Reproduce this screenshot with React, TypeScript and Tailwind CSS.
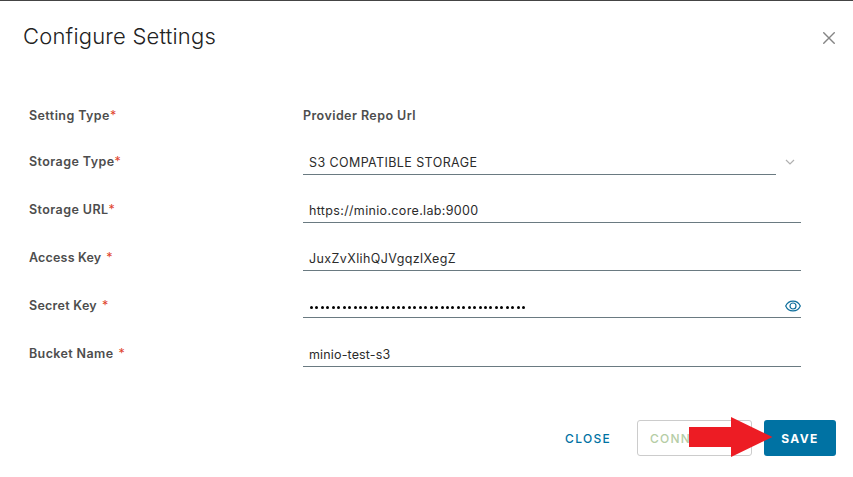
import type { ReactNode } from "react";

type RowProps = {
  label: string;
  labelClass: string;
  rowClass: string;
  required?: "tight" | "spaced";
  children: ReactNode;
};

const SECRET_LENGTH = 40;

function Row({ label, labelClass, rowClass, required = "spaced", children }: RowProps) {
  return (
    <div className={`flex ${rowClass}`}>
      <label className="w-[274px] shrink-0 text-[12.5px] leading-5 font-semibold whitespace-nowrap text-[#4d4d4d]">
        <span className={labelClass}>{label}</span>
        <span className={`font-normal text-[#e0442c] ${required === "spaced" ? "ml-[5px]" : ""}`}>*</span>
      </label>
      {children}
    </div>
  );
}

function Field({ children, className = "w-[498px]" }: { children: ReactNode; className?: string }) {
  return (
    <div
      className={`-mt-6 flex items-end border-b border-[#6a7a81] pl-1.5 text-[12.5px] leading-[22px] whitespace-nowrap text-[#2b2b2b] ${className}`}
    >
      {children}
    </div>
  );
}

function EyeIcon() {
  return (
    <svg width="16" height="12" viewBox="0 0 16 12" fill="none" stroke="#0f6f9c" strokeWidth="1.2">
      <path d="M.7 6C2.200 2.600 4.900 1.100 8 1.100s5.800 1.500 7.300 4.900C13.800 9.400 11.100 10.900 8 10.900S2.200 9.400.7 6Z" />
      <circle cx="8" cy="6" r="3" />
    </svg>
  );
}

export default function App() {
  return (
    <div className="relative h-[477px] w-[853px] overflow-hidden border-t border-[#444] bg-white font-['Inter',sans-serif]">
      {/* Header */}
      <header className="flex h-[80px] items-start justify-between pt-[19px] pr-[18px] pl-[23px]">
        <h1 className="text-[22px] leading-8 font-light tracking-[0.2px] text-[#222]">Configure Settings</h1>
        <button className="mt-[12px]" aria-label="Close dialog">
          <svg width="12" height="12" viewBox="0 0 12 12" fill="none" stroke="#858585" strokeWidth="1.4">
            <path d="M.3.3l11.400 11.400M11.700.3L.3 11.700" />
          </svg>
        </button>
      </header>

      {/* Settings form */}
      <main className="pl-[29px]">
        <Row label="Setting Type" labelClass="tracking-[0.42px]" rowClass="h-[46px] pt-[25px]" required="tight">
          <div className="text-[12.5px] leading-5 font-semibold tracking-[0.43px] text-[#4d4d4d]">
            Provider Repo Url
          </div>
        </Row>
        <Row label="Storage Type" labelClass="tracking-[0.42px]" rowClass="h-[48px] pt-[25px]" required="tight">
          <Field className="w-[473px]">
            <span className="tracking-[0.4px]">S3 COMPATIBLE STORAGE</span>
          </Field>
          <svg className="mt-[7px] ml-[9px]" width="10" height="7" viewBox="0 0 10 7" fill="none" stroke="#b0b0b0" strokeWidth="1.2">
            <path d="M1 1l4 4 4-4" />
          </svg>
        </Row>
        <Row label="Storage URL" labelClass="tracking-[0.42px]" rowClass="h-[48px] pt-[25px]" required="tight">
          <Field>
            <span className="tracking-[0.34px]">https://minio.core.lab:9000</span>
          </Field>
        </Row>
        <Row label="Access Key" labelClass="tracking-[0.18px]" rowClass="h-[48px] pt-[25px]">
          <Field>
            <span className="tracking-[0.4px]">JuxZvXlihQJVgqzlXegZ</span>
          </Field>
        </Row>
        <Row label="Secret Key" labelClass="tracking-[0.27px]" rowClass="h-[47px] pt-[25px]">
          <Field>
            <div className="mb-[8px] flex flex-1 gap-[2.440px] pl-px">
              {Array.from({ length: SECRET_LENGTH }, (_, i) => (
                <span key={i} className="size-[3px] rounded-full bg-black" />
              ))}
            </div>
            <button className="mb-[5px]" aria-label="Show secret key">
              <EyeIcon />
            </button>
          </Field>
        </Row>
        <Row label="Bucket Name" labelClass="tracking-[0.38px]" rowClass="h-[49px] pt-[26px]">
          <Field>
            <span className="tracking-[0.15px]">minio-test-s3</span>
          </Field>
        </Row>
      </main>

      {/* Actions */}
      <footer className="mt-[53px] flex h-[36px] justify-end pr-[17px] text-[12px] font-medium">
        <button className="mr-[26px] pt-px tracking-[1.3px] text-[#0072a3]">CLOSE</button>
        <button className="mr-3 w-[115px] rounded-[3px] border border-[#ccc] pt-px pl-3 text-left tracking-[1.2px] text-[#b5cda5]">
          CONNECT
        </button>
        <button className="w-[72px] rounded-[3px] bg-[#0072a3] pt-px font-bold tracking-[1.35px] text-white">SAVE</button>
      </footer>

      {/* Pointer to the save action */}
      <svg className="absolute top-[416px] left-[689px]" width="84" height="40" viewBox="0 0 84 40" fill="#ed1c24">
        <path d="M0 10h42V0l41.500 20L42 40V30H0Z" />
      </svg>
    </div>
  );
}
